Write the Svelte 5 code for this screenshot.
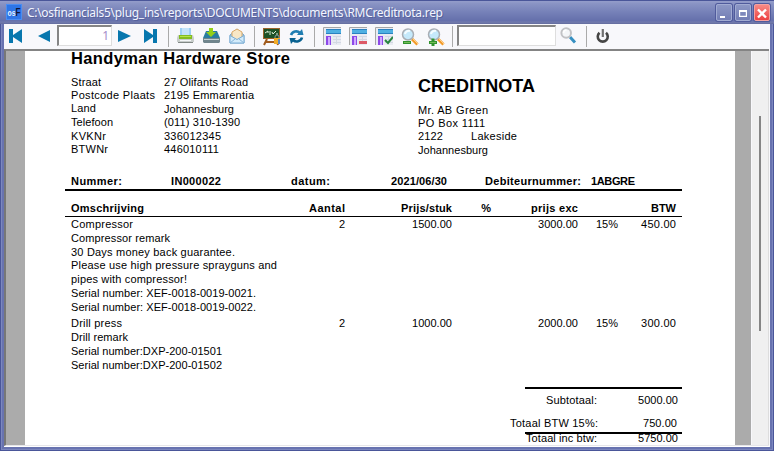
<script>
  function fit(node, width) {
    const count = node.textContent.length - 1;
    if (count < 1) return;
    const spacing = (width - node.getBoundingClientRect().width) / count;
    node.style.letterSpacing = spacing + 'px';
    node.style.marginRight = -spacing + 'px';
  }

  const company = [
    ['Straat', 30, '27 Olifants Road', 84, 75],
    ['Postcode Plaats', 84, '2195 Emmarentia', 90, 88],
    ['Land', 25, 'Johannesburg', 70, 101],
    ['Telefoon', 42, '(011) 310-1390', 76, 115],
    ['KVKNr', 35, '336012345', 57, 129],
    ['BTWNr', 37, '446010111', 55, 142]
  ];

  const items = [
    {
      cells: [['Compressor', 62], ['2', 6], ['1500.00', 40], ['', 0], ['3000.00', 40], ['15%', 22], ['450.00', 35]],
      notes: [
        ['Compressor remark', 99],
        ['30 Days money back guarantee.', 164],
        ['Please use high pressure sprayguns and', 206],
        ['pipes with compressor!', 116],
        ['Serial number: XEF-0018-0019-0021.', 185],
        ['Serial number: XEF-0018-0019-0022.', 185]
      ]
    },
    {
      cells: [['Drill press', 51], ['2', 6], ['1000.00', 40], ['', 0], ['2000.00', 40], ['15%', 22], ['300.00', 35]],
      notes: [
        ['Drill remark', 57],
        ['Serial number:DXP-200-01501', 151],
        ['Serial number:DXP-200-01502', 151]
      ]
    }
  ];
  const heads = [['Omschrijving', 73], ['Aantal', 36], ['Prijs/stuk', 51], ['%', 10], ['prijs exc', 47], ['', 0], ['BTW', 25]];
</script>

{#snippet cell(text, width)}
  <span class="cell">{#if text}<span class="t" use:fit={width}>{text}</span>{/if}</span>
{/snippet}

{#snippet grid(mark)}
  <svg width="18" height="18" viewBox="0 0 18 18">
    <path d="M.5 18V.5H18" fill="none" stroke="#a7a7a7" />
    <path d="M1 1h17v17H1z" fill="#e9ebf2" />
    <path d="M3 2h15v5H3z" fill="#4fb0e2" /><path d="M3 2h15v1H3zM3 6h15v1H3z" fill="#2a82c0" />
    <path d="M3 9h5v9H3z" fill="#8c48e8" /><path d="M5 10h2v8H5z" fill="#cfa9ff" />
    <path d="M10 9.5h8M10 12.5h8M10 15.5h8M13.5 9v8" stroke="#d3d8e3" />
    {#if mark === 'minus'}<path d="M10 14h8v3h-8z" fill="#dd5967" />{/if}
    {#if mark === 'check'}<path d="M10 13l3 3 5-6" fill="none" stroke="#288540" stroke-width="2" />{/if}
  </svg>
{/snippet}

{#snippet lens(sign)}
  <svg width="18" height="18" viewBox="0 0 18 18">
    <path d="M11 11l5.5 5.5" stroke="#f39a28" stroke-width="3" />
    <path d="M11 10l6 6" stroke="#ffd08a" />
    <circle cx="7" cy="6.5" r="5.5" fill="#c5e9fb" stroke="#a9aeb5" stroke-width="1.5" />
    <path d="M4 6a4 4 0 0 1 5-3" stroke="#f5fcff" stroke-width="2" fill="none" />
    <path d="M2 14.5h8" stroke="#32932f" stroke-width="3" />
    {#if sign === 'plus'}<path d="M6 10.5v7.5" stroke="#32932f" stroke-width="3" />{/if}
    <path d="M3 14.5h6" stroke="#75bd58" />
  </svg>
{/snippet}

<div class="window">
  <header>
    <svg class="app" width="16" height="16" viewBox="0 0 16 16">
      <rect width="16" height="16" fill="#2e75e7" />
      <rect x=".5" y=".5" width="15" height="15" fill="none" stroke="#4a8df2" />
      <text x="1.5" y="12" font-size="9" font-weight="bold"><tspan fill="#e5f3ff" textLength="8" lengthAdjust="spacingAndGlyphs">os</tspan><tspan fill="#101535" font-size="10" textLength="5" lengthAdjust="spacingAndGlyphs">F</tspan></text>
    </svg>
    <span class="title"><span class="t" use:fit={416}>C:\osfinancials5\plug_ins\reports\DOCUMENTS\documents\RMCreditnota.rep</span></span>
    <div class="controls">
      <button aria-label="Minimize"><svg width="14" height="14"><path d="M3 10h5v2H3z" fill="#fff" /></svg></button>
      <button aria-label="Maximize"><svg width="14" height="14"><path d="M3 4h8v7H3zM4.2 6v3.8h5.6V6z" fill="#fff" fill-rule="evenodd" /></svg></button>
      <button class="close" aria-label="Close"><svg width="14" height="14"><path d="M3 3.5l8 8M11 3.5l-8 8" stroke="#fff" stroke-width="2.4" /></svg></button>
    </div>
  </header>

  <div class="body">
    <div class="toolbar">
      <div class="nav">
        <svg width="14" height="14" viewBox="0 0 14 14"><path d="M0 0h4v6l9-6v14L4 8v6H0z" fill="#0877ae" /></svg>
        <svg width="12" height="12" viewBox="0 0 12 12"><path d="M12 0v12L0 6z" fill="#0877ae" /></svg>
      </div>
      <div class="field page-no">1</div>
      <div class="nav next">
        <svg width="13" height="12" viewBox="0 0 13 12"><path d="M0 0l13 6-13 6z" fill="#0877ae" /></svg>
        <svg width="14" height="14" viewBox="0 0 14 14"><path d="M14 0h-4v6L1 0v14l9-6v6h4z" fill="#0877ae" /></svg>
      </div>
      <i class="sep"></i>
      <div class="group output">
        <svg width="17" height="17" viewBox="0 0 17 17">
          <path d="M3 0h11v8H3z" fill="#c3e3fa" /><path d="M3 0h2v8H3zM12 0h2v8h-2z" fill="#9dcff3" />
          <path d="M1 7h15l1 3v4H0v-4z" fill="#c9cecc" /><path d="M2 7h13v4H2z" fill="#83bd20" /><path d="M3 8h11v1H3z" fill="#b5e34a" />
          <path d="M1 14h15v1H1z" fill="#828986" /><path d="M3 12h11v1H3z" fill="#f5f7f8" />
        </svg>
        <svg width="17" height="17" viewBox="0 0 17 17">
          <path d="M3 3h11l3 7v4H0v-4z" fill="#297ca0" /><path d="M0 10h17v4l-1 1H1l-1-1z" fill="#70858d" /><path d="M1 11h15v1H1z" fill="#c2d0d3" />
          <path d="M6 0h4v4h3L8 9 3 4h3z" fill="#93cf17" />
        </svg>
        <svg width="17" height="17" viewBox="0 0 17 17">
          <path d="M1 7l7-6 7 6v8H1z" fill="#a6cde9" stroke="#77a7ce" /><path d="M3 4l5-3 5 3v5l-5 3-5-3z" fill="#f8e7c6" stroke="#dba968" />
          <path d="M1 7.5l7 4 7-4V15H1z" fill="#d3ebfa" stroke="#7caed6" /><path d="M1 15l5-4M15 15l-5-4" stroke="#88b6da" />
        </svg>
      </div>
      <i class="sep s2"></i>
      <div class="group design">
        <svg width="18" height="18" viewBox="0 0 18 18">
          <path d="M4 11L1 17M13 11l2 6M2 14h13" stroke="#a05b1d" stroke-width="2" />
          <path d="M0 0h17v11H0z" fill="#9a632b" /><path d="M1 1h15v9H1z" fill="#1d5226" />
          <path d="M2 5l3-2v2M7 3v4M9 4l1 2 3-3M13 6h2" stroke="#dcedd7" fill="none" />
          <path d="M12 10v-1a2 2 0 0 1 4 0v1" stroke="#88939d" fill="none" /><path d="M11 10h6v6h-6z" fill="#f1ab28" /><path d="M15 11h2v5h-2z" fill="#5c8bc3" />
        </svg>
        <svg width="15" height="15" viewBox="0 0 15 15">
          <path d="M2 6a5.5 5.5 0 0 1 9-2" fill="none" stroke="#217eb2" stroke-width="2.6" /><path d="M8 6h6.5L13 0z" fill="#217eb2" />
          <path d="M13 8.5a5.5 5.5 0 0 1-9 2.5" fill="none" stroke="#096291" stroke-width="2.6" /><path d="M7 9H.5L2 15z" fill="#096291" />
        </svg>
      </div>
      <i class="sep s3"></i>
      <div class="group view">
        {@render grid('')}{@render grid('minus')}{@render grid('check')}{@render lens('minus')}{@render lens('plus')}
      </div>
      <i class="sep s4"></i>
      <div class="field search"></div>
      <svg class="find" width="17" height="17" viewBox="0 0 17 17">
        <path d="M10 10l5 5.5" stroke="#368fc1" stroke-width="3" /><circle cx="6.2" cy="6" r="4.8" fill="#f4f6f8" stroke="#c1c2c5" stroke-width="2" />
        <path d="M3.5 6a3 3 0 0 1 3-3" stroke="#fff" stroke-width="1.5" fill="none" />
      </svg>
      <i class="sep s5"></i>
      <svg class="power" width="14" height="15" viewBox="0 0 14 15">
        <path d="M3.5 3.8a5 5 0 1 0 6.5 0" fill="none" stroke="#454545" stroke-width="2.6" /><path d="M6.8 0v8" stroke="#707070" stroke-width="2.2" />
      </svg>
    </div>

    <div class="viewer">
      <div class="gutter left"></div>
      <main>
        <div class="top">
          <div class="company">
            <h1><span class="t" use:fit={219}>Handyman Hardware Store</span></h1>
            {#each company as [label, lw, value, vw, y], i}
              <div class="pair" style:height="{(company[i + 1]?.[4] ?? 156) - y}px">{@render cell(label, lw)}{@render cell(value, vw)}</div>
            {/each}
          </div>
          <div class="customer">
            <h2><span class="t" use:fit={117}>CREDITNOTA</span></h2>
            <div>{@render cell('Mr. AB Green', 70)}</div>
            <div>{@render cell('PO Box 1111', 67)}</div>
            <div class="city">{@render cell('2122', 25)}{@render cell('Lakeside', 46)}</div>
            <div>{@render cell('Johannesburg', 70)}</div>
          </div>
        </div>

        <div class="meta">
          {@render cell('Nummer:', 51)}{@render cell('IN000022', 50)}{@render cell('datum:', 39)}{@render cell('2021/06/30', 56)}{@render cell('Debiteurnummer:', 96)}{@render cell('1ABGRE', 44)}
        </div>
        <div class="row head">
          {#each heads as [text, w]}{@render cell(text, w)}{/each}
        </div>
        {#each items as item}
          <div class="item">
            <div class="row">
              {#each item.cells as [text, w]}{@render cell(text, w)}{/each}
            </div>
            {#each item.notes as [text, w]}
              <div class="note">{@render cell(text, w)}</div>
            {/each}
          </div>
        {/each}

        <div class="totals">
          <div class="sum sub">{@render cell('Subtotaal:', 51)}{@render cell('5000.00', 40)}</div>
          <div class="sum vat">{@render cell('Totaal BTW 15%:', 88)}{@render cell('750.00', 34)}</div>
          <div class="sum all">{@render cell('Totaal inc btw:', 71)}{@render cell('5750.00', 40)}</div>
        </div>
      </main>
      <div class="gutter right"></div>
      <div class="scroll"><div class="thumb"></div></div>
    </div>
  </div>
</div>

<style>
  * { box-sizing: border-box; }
  .window {
    width: 774px; height: 451px; padding: 0 4px 4px; overflow: hidden;
    display: flex; flex-direction: column;
    background: #6873b0; box-shadow: inset 0 0 0 1px #4a5699, inset 0 0 0 2px #7c87bf, inset 0 0 0 3px #6873b0;
    font: 11px/14px "Liberation Sans", Arial, sans-serif; color: #000;
  }
  .t { display: inline-block; white-space: pre; }
  svg { display: block; flex: none; }
  header {
    height: 24px; flex: none; display: flex; margin: 0 -4px; padding: 4px 4px 0 6px;
    background: linear-gradient(#4a5699 0 1px, #929bc9 1px 2px, #8b95c5 3px, #7681b8 12px, #646fab 21px, #737cae 22px, #626b9e 24px);
  }
  .title { margin-left: 5px; font: 12px/17px "Noto Sans", sans-serif; color: #f2f5ff; text-shadow: 1px 1px 0 #56619b; }
  .controls { margin-left: auto; display: flex; gap: 3px; }
  button {
    width: 16px; height: 17px; padding: 0; border: 1px solid #a1abd2; border-radius: 2px;
    background: linear-gradient(#8c97c5, #737eb5); box-shadow: 0 0 0 1px #505b9c;
  }
  .close { background: linear-gradient(#f68a86, #ed4141); border-color: #f5a09f; }
  .body { flex: 1; min-height: 0; display: flex; flex-direction: column; background: #f8f8fb; padding-right: 1px; }
  .toolbar { height: 25px; flex: none; display: flex; padding-left: 5px; }
  .nav { width: 41px; display: flex; justify-content: space-between; padding-top: 5px; }
  .nav svg[height="12"] { margin-top: 1px; }
  .field { height: 21px; margin-top: 1px; background: #fff; border: 1px solid #dedede; border-top: 2px solid #858585; border-left: 2px solid #858585; }
  .page-no { width: 55px; margin-left: 7px; padding-right: 2px; text-align: right; font: 12px/17px "Noto Sans", sans-serif; color: #a58cca; }
  .next { width: 39px; margin-left: 6px; }
  .sep { width: 1px; height: 21px; margin: 2px 0 0 11px; background: #aaa; flex: none; }
  .group { display: flex; padding-top: 4px; }
  .output { gap: 9px; margin-left: 8px; }
  .s2 { margin-left: 8px; }
  .design { margin-left: 8px; gap: 8px; }
  .design svg:last-child { margin-top: 1px; }
  .s3 { margin-left: 10px; }
  .view { gap: 8px; margin-left: 8px; padding-top: 3px; }
  .view svg:nth-child(n+4) { margin-top: 1px; }
  .s4 { margin-left: 7px; }
  .search { width: 99px; margin-left: 4px; }
  .find { margin: 3px 0 0 4px; }
  .s5 { margin-left: 9px; }
  .power { margin: 5px 0 0 9px; }

  .viewer { flex: 1; min-height: 0; display: flex; border-top: 2px solid #848484; border-left: 2px solid #777; border-bottom: 1px solid #e6e6ea; box-shadow: 0 1px #fff; margin-bottom: 1px; }
  .gutter { background: #ababab; flex: none; }
  .left { width: 19px; }
  .right { width: 16px; }
  main { width: 710px; flex: none; background: #fff; padding: 0 53px 0 40px; overflow: hidden; display: flex; flex-direction: column; }
  main > * { flex: none; }
  .cell { display: block; height: 14px; white-space: pre; }
  .top { display: flex; height: 123px; padding-left: 6px; }
  .company { width: 347px; }
  h1, h2 { margin: 0; font-weight: bold; }
  h1 { height: 24px; font-size: 16.5px; line-height: 15px; }
  .pair { display: grid; grid-template-columns: 93px auto; }
  .pair:nth-of-type(3) .cell:last-child { padding-top: 1px; }
  h2 { height: 52px; padding-top: 24px; font-size: 18px; line-height: 22px; }
  .customer > div { height: 13px; }
  .customer .city { height: 14px; display: grid; grid-template-columns: 53px auto; }
  .meta {
    height: 17px; padding-left: 6px; display: grid; font-weight: bold; border-bottom: 2px solid #000;
    grid-template-columns: 100px 120px 100px 94px 106px auto;
  }
  .row { display: grid; padding-left: 6px; grid-template-columns: 210px 64px 107px 39px 87px 40px 58px; justify-content: start; }
  .row .cell:not(:first-child) { text-align: right; }
  .head { height: 26px; padding-top: 10px; font-weight: bold; border-bottom: 1px solid #000; }
  .item + .item { padding-top: 2px; }
  .note { padding-left: 6px; height: 14px; }
  .item .note:nth-child(4) { margin-top: -1px; }
  .item + .item .note:nth-child(4) { margin-top: 0; }
  .totals { width: 157px; margin: 15px 0 0 auto; border-top: 2px solid #000; }
  .sum { display: flex; justify-content: flex-end; }
  .sum .cell:last-child { width: 81px; text-align: right; }
  .sub { padding: 4px 4px 0 0; }
  .vat { padding: 9px 5px 0 0; height: 27px; margin-left: -20px; }
  .vat .cell:last-child { width: 79px; }
  .all { margin-top: -2px; border-top: 2px solid #000; padding-right: 4px; }
  .all .cell { margin-top: -3px; }
  .scroll { flex: 1; margin-left: 1px; background: #f0f0f0; padding: 65px 0 0 7px; border-right: 1px solid #ddd; }
  .thumb { width: 2px; height: 215px; background: #858585; }
</style>
